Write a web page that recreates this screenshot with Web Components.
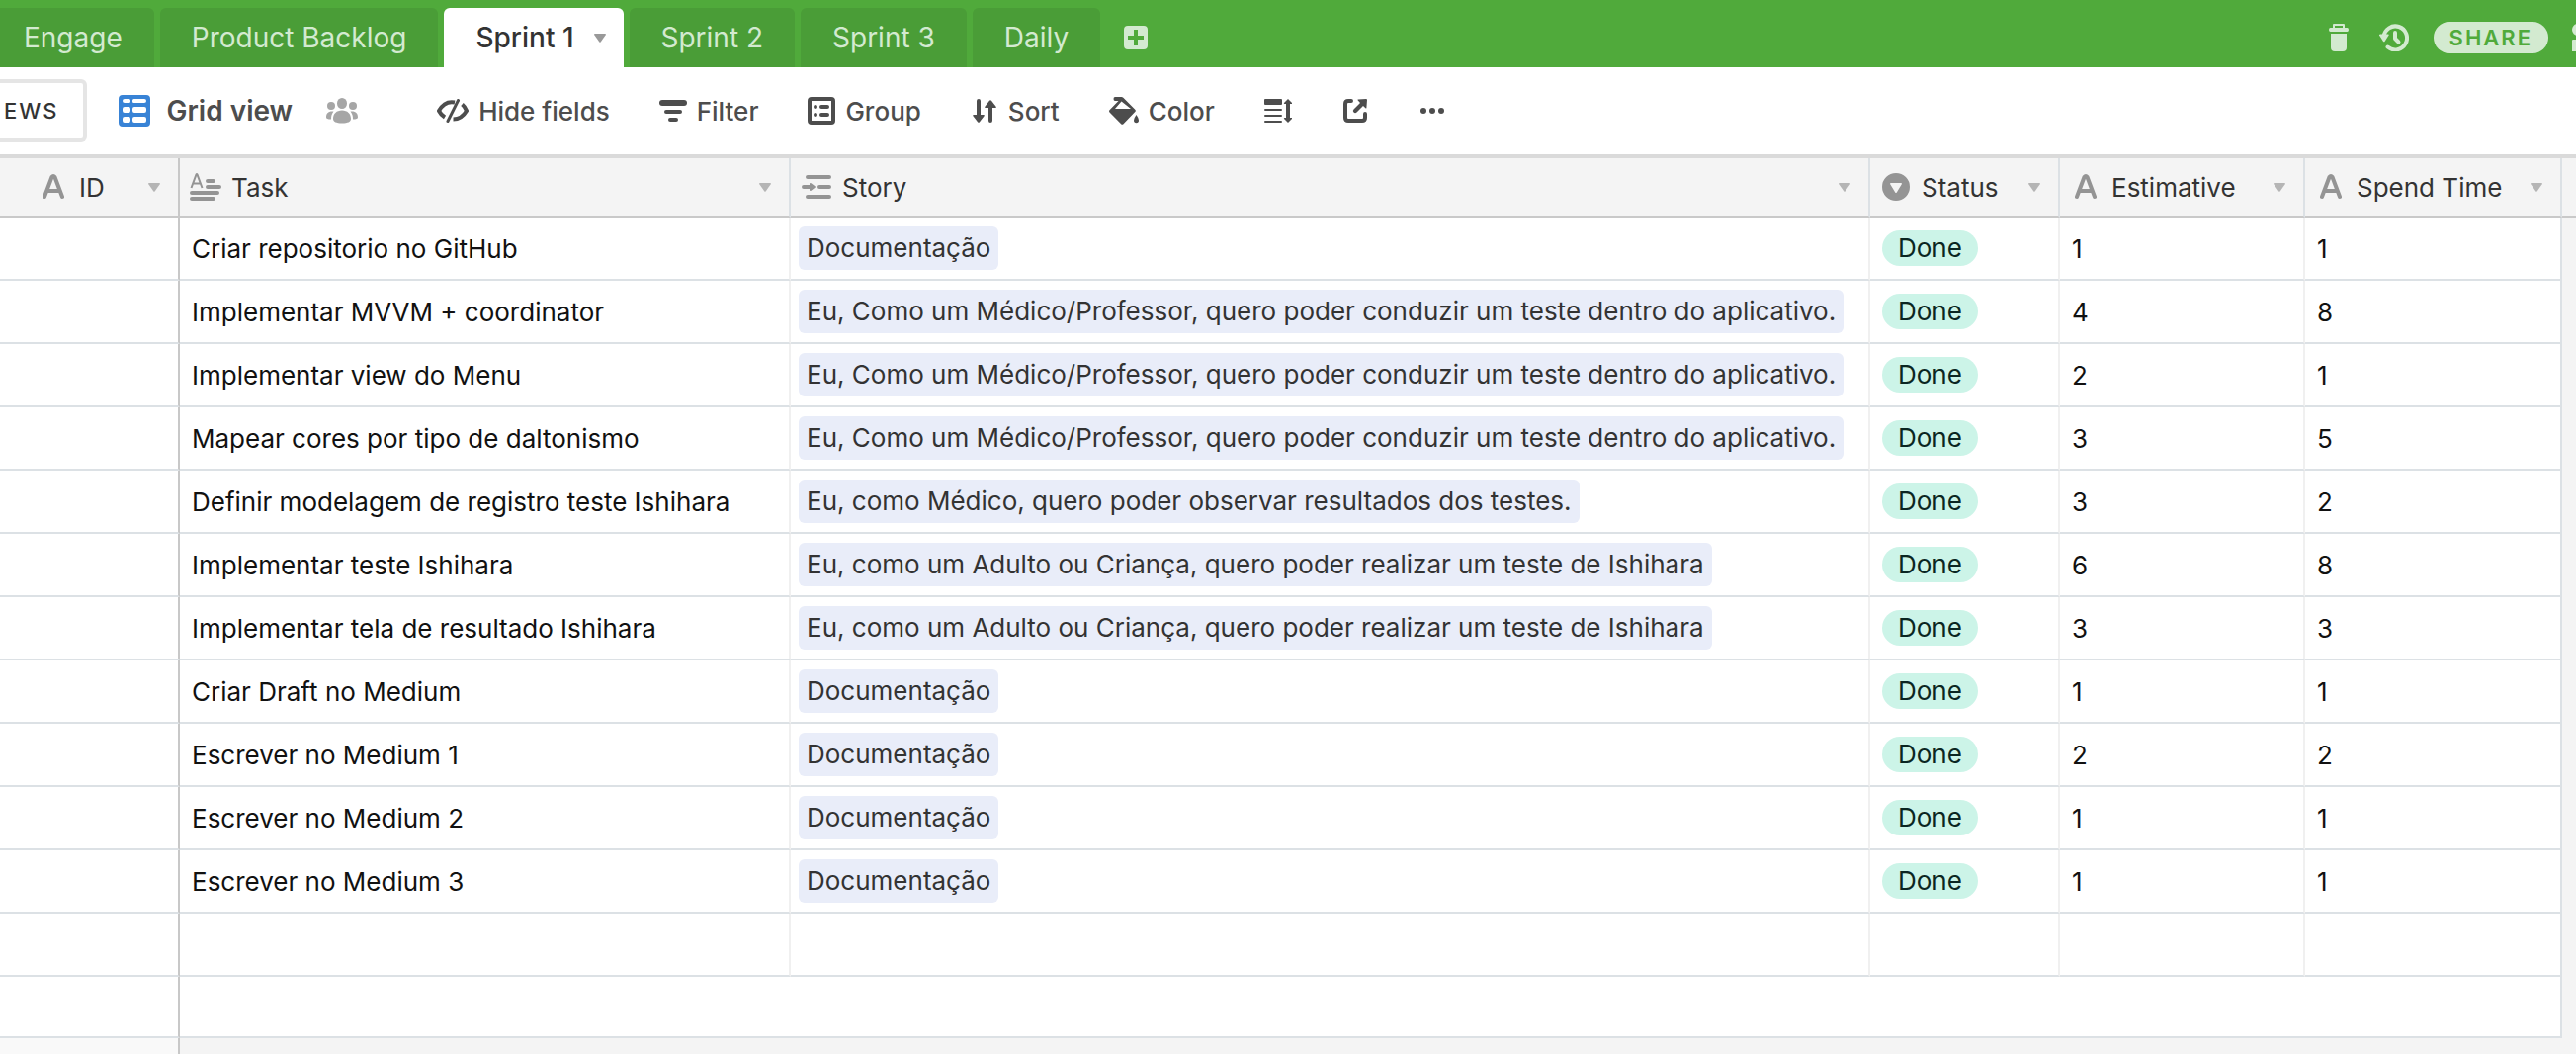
<!DOCTYPE html>
<html lang="pt">
<head>
<meta charset="utf-8">
<title>Sprint 1: Grid view</title>
<style>
  html, body { margin: 0; min-height: 100%; }
  body {
    background: #f4f4f4;
    font-family: Inter, "Liberation Sans", sans-serif;
    font-size: 26px;
    color: #333;
    overflow: hidden;
  }
</style>
</head>
<body>
<base-app></base-app>
<script>
const ICONS = {
  plus: [24, 24, '<path fill-rule="evenodd" d="M4 0h16a4 4 0 0 1 4 4v16a4 4 0 0 1-4 4H4a4 4 0 0 1-4-4V4a4 4 0 0 1 4-4zM10 4v6H4v4h6v6h4v-6h6v-4h-6V4z"/>'],
  trash: [20, 28, '<path fill-rule="evenodd" d="M4 4V1q0-1 1-1h10q1 0 1 1v3h2.500a1.500 2 0 0 1 0 4h-17a1.500 2 0 0 1 0-4zM6 2v2h8V2z"/><path d="M2 10h16v14q0 4-4 4H6q-4 0-4-4z"/>'],
  history: [30, 28, '<path d="M4.500 13A11.800 12 0 1 1 8.500 23.500" fill="none" stroke="currentColor" stroke-width="4" stroke-linecap="round"/><path d="M0 11.500q-.3-1 1-1h8q1 0 .6 1L5.500 18q-.7.700-1.400 0z"/><path d="M16 9v6l3.500 3.500" fill="none" stroke="currentColor" stroke-width="4" stroke-linecap="round" stroke-linejoin="round"/>'],
  person: [32, 28, '<circle cx="6" cy="6" r="6"/><path d="M0 17q0-1 1-1h14q1 0 1 1v11H0z"/>'],
  grid: [32, 32, '<path fill-rule="evenodd" d="M4 0h24a4 4 0 0 1 4 4v24a4 4 0 0 1-4 4H4a4 4 0 0 1-4-4V4a4 4 0 0 1 4-4zM6 4a2 2 0 0 0 0 4h4.500a1.500 1.500 0 0 0 1.500-1.500v-1A1.500 1.500 0 0 0 10.500 4zM15.500 4A1.500 1.500 0 0 0 14 5.500v1A1.500 1.500 0 0 0 15.500 8H26a2 2 0 0 0 0-4zM6 12a2 2 0 0 0-2 2v2a2 2 0 0 0 2 2h4a2 2 0 0 0 2-2v-2a2 2 0 0 0-2-2zM16 12a2 2 0 0 0-2 2v2a2 2 0 0 0 2 2h10a2 2 0 0 0 2-2v-2a2 2 0 0 0-2-2zM6 22a2 2 0 0 0-2 2v2a2 2 0 0 0 2 2h4a2 2 0 0 0 2-2v-2a2 2 0 0 0-2-2zM16 22a2 2 0 0 0-2 2v2a2 2 0 0 0 2 2h10a2 2 0 0 0 2-2v-2a2 2 0 0 0-2-2z"/>'],
  people: [32, 26, '<ellipse cx="16" cy="5.500" rx="5" ry="5.500"/><ellipse cx="5" cy="8" rx="4" ry="4"/><ellipse cx="27" cy="8" rx="4" ry="4"/><path d="M16 12.500c5.500 0 9 3.500 9 8.500 0 3-3 4.500-9 4.500S7 24 7 21c0-5 3.500-8.500 9-8.500zM7.500 13.500C5.500 16 5 18.500 5 21.500c-3.500 0-5-.5-5-2 0-4 2-6.500 7.500-6zM24.500 13.500c2 2.500 2.500 5 2.500 8 3.500 0 5-.5 5-2 0-4-2-6.500-7.500-6z"/>'],
  hide: [32, 24, '<path d="M18 3.500Q8 1.500 2 12q2 4 6 6.500M25.500 5.500q3 2.500 4.500 6.500-5 8.500-13.500 8.500" fill="none" stroke="currentColor" stroke-width="4"/><path d="M21.500 1.500 11 22.500" stroke="currentColor" stroke-width="3" stroke-linecap="round"/>'],
  filter: [28, 22, '<rect width="28" height="6" rx="3"/><rect x="5" y="10" width="18" height="4" rx="2"/><rect x="9" y="18" width="10" height="4" rx="2"/>'],
  group: [28, 28, '<rect x="2" y="2" width="24" height="24" rx="2" fill="none" stroke="currentColor" stroke-width="4"/><circle cx="8" cy="10" r="2"/><circle cx="8" cy="18" r="2"/><rect x="12" y="8" width="10" height="4" rx="2"/><rect x="12" y="16" width="10" height="4" rx="2"/>'],
  sort: [24, 24, '<path d="M4 2a2 2 0 0 1 4 0v14h3q1.500 0 .6 1.200L7 23.300q-1 1-2 0L.4 17.200Q-.5 16 1 16h3zM16 22a2 2 0 0 0 4 0V9h3q1.500 0 .6-1.200L19 1.700q-1-1-2 0l-4.600 6.100Q11.500 9 13 9h3z"/>'],
  color: [30, 28, '<path fill-rule="evenodd" d="M6 0h6.500q1 0 1.800.8L26.500 13q.8 1-.2 2L14.500 27.200q-1.200 1.200-2.400 0L.5 15.500q-1-1.200 0-2.200L9.500 4H6a1.500 2 0 0 1 0-4zM12.500 4.500 6 12h16z"/><path d="M27.500 18q2.500 3.500 2.500 5.500a2.500 2.800 0 0 1-5 0q0-2 2.500-5.500z"/>'],
  rows: [28, 24, '<rect width="18" height="6" rx="1"/><rect y="10" width="18" height="2" rx="1"/><rect y="16" width="18" height="2" rx="1"/><rect y="22" width="18" height="2" rx="1"/><path d="M24 0l4 4q.5 1-.5 1H26v14h1.500q1 0 .5 1l-4 4-4-4q-.5-1 .5-1H22V5h-1.500q-1 0-.5-1z"/>'],
  open: [24, 24, '<path d="M8 2H5Q2 2 2 5v14q0 3 3 3h14q3 0 3-3v-4" fill="none" stroke="currentColor" stroke-width="4" stroke-linecap="round"/><path d="M23 0q1 0 1 1l-.6 8q-.2 1-1 .3L20 7l-6.500 6.500a2 2 0 0 1-3-3L17 4l-2.300-2.400q-.7-.8.300-1z"/>'],
  dots: [24, 6, '<circle cx="3" cy="3" r="3"/><circle cx="12" cy="3" r="3"/><circle cx="21" cy="3" r="3"/>'],
  text: [22, 26, '<path d="M2 23 9.500 3q1.500-2 3 0L20 23M5.500 17h11" fill="none" stroke="currentColor" stroke-width="4" stroke-linecap="round" stroke-linejoin="round"/>'],
  longtext: [32, 28, '<path d="M1.500 15 6.500 1.500q.5-1 1 0l5 13.500M3.500 10.500h7" fill="none" stroke="currentColor" stroke-width="2"/><rect x="16" y="6" width="10" height="4" rx="2"/><rect x="16" y="12" width="16" height="4" rx="2"/><rect y="18" width="30" height="4" rx="2"/><rect y="24" width="26" height="4" rx="2"/>'],
  link: [30, 24, '<rect x="4" width="26" height="4" rx="2"/><rect x="16" y="10" width="14" height="4" rx="2"/><rect x="4" y="20" width="26" height="4" rx="2"/><path d="M2 10h6V9q0-1.500 1.500-.8l4 3q1 .8 0 1.600l-4 3Q8 16.500 8 15v-1H2a2 2 0 0 1 0-4z"/>'],
  select: [28, 28, '<path fill-rule="evenodd" d="M14 0a14 14 0 1 1 0 28 14 14 0 0 1 0-28zM9 10q-1.500 0-.8 1.300l5 8.200q.8 1 1.600 0l5-8.200Q20.500 10 19 10z"/>'],
  caret: [12, 9, '<path d="M1 0h10q1.500 0 .7 1.300l-4.900 7q-.8 1-1.600 0l-4.900-7Q-.5 0 1 0z"/>']
};

class UiIcon extends HTMLElement {
  connectedCallback() {
    const [w, h, art] = ICONS[this.getAttribute('name')];
    this.attachShadow({ mode: 'open' }).innerHTML = `
      <style>
        :host { display: flex; flex: none; justify-content: center; }
        svg { display: block; fill: currentColor; }
      </style>
      <svg width="${w}" height="${h}" viewBox="0 0 ${w} ${h}" aria-hidden="true">${art}</svg>`;
  }
}

class TableTab extends HTMLElement {
  connectedCallback() {
    this.attachShadow({ mode: 'open' }).innerHTML = `
      <style>
        :host { display: block; }
        button {
          display: flex; align-items: center; height: 60px; gap: 20px;
          padding: 0 32px; border: 0; border-radius: 6px 6px 0 0;
          background: #4a9d37; color: #d3ead0; font: inherit; white-space: nowrap;
        }
        ui-icon { display: none; color: #999; }
        :host([active]) button { background: #fff; color: #333; font-weight: 500; padding-right: 18px; }
        :host([active]) ui-icon { display: block; }
      </style>
      <button role="tab" aria-selected="${this.hasAttribute('active')}"><slot></slot><ui-icon name="caret"></ui-icon></button>`;
  }
}

class TopBar extends HTMLElement {
  connectedCallback() {
    this.attachShadow({ mode: 'open' }).innerHTML = `
      <style>
        :host {
          display: flex; align-items: center; justify-content: space-between;
          height: 68px; background: #50aa3b; color: #d3ead0; font-size: 28px; overflow: hidden;
        }
        nav { display: flex; gap: 6px; padding-top: 8px; margin-left: -8px; align-items: center; }
        button { display: flex; align-items: center; justify-content: center; border: 0; background: none; padding: 0; color: inherit; font: inherit; }
        .add { margin-left: 18px; }
        .actions { display: flex; align-items: center; gap: 24px; padding-top: 8px; margin-right: -28px; }
        .actions button { min-width: 32px; }
        .share {
          height: 32px; padding: 0 16px; border-radius: 16px; background: #d3ead0; color: #50aa3b;
          font-size: 22px; font-weight: 600; letter-spacing: 2px;
        }
      </style>
      <nav role="tablist">
        <table-tab>Engage</table-tab><table-tab>Product Backlog</table-tab>
        <table-tab active>Sprint 1</table-tab><table-tab>Sprint 2</table-tab>
        <table-tab>Sprint 3</table-tab><table-tab>Daily</table-tab>
        <button class="add" aria-label="Add table"><ui-icon name="plus"></ui-icon></button>
      </nav>
      <div class="actions">
        <button aria-label="Trash"><ui-icon name="trash"></ui-icon></button>
        <button aria-label="History"><ui-icon name="history"></ui-icon></button>
        <button class="share">SHARE</button>
        <button aria-label="Collaborators"><ui-icon name="person"></ui-icon></button>
      </div>`;
  }
}

class ToolButton extends HTMLElement {
  connectedCallback() {
    this.attachShadow({ mode: 'open' }).innerHTML = `
      <style>
        :host { display: block; }
        ui-icon { min-width: 28px; }
        button {
          display: flex; align-items: center; gap: 10px; height: 48px; padding: 0;
          border: 0; background: none; color: #4d4d4d; font: inherit; font-weight: 500; white-space: nowrap;
        }
      </style>
      <button aria-label="${this.getAttribute('label') || this.textContent}"><ui-icon name="${this.getAttribute('icon')}"></ui-icon><slot></slot></button>`;
  }
}

class ViewBar extends HTMLElement {
  connectedCallback() {
    this.attachShadow({ mode: 'open' }).innerHTML = `
      <style>
        :host { display: flex; align-items: center; height: 88px; background: #fff; border-bottom: 4px solid #dadada; }
        button { font: inherit; background: none; border: 0; padding: 0; }
        .views {
          height: 64px; padding: 0 24px 0 4px; border: 4px solid #e5e5e5; border-left: 0;
          border-radius: 0 6px 6px 0; color: #333; font-size: 22px; font-weight: 500; letter-spacing: 2px;
        }
        .view { display: flex; align-items: center; gap: 17px; margin-left: 32px; font-size: 28px; font-weight: 600; color: #4d4d4d; white-space: nowrap; }
        .grid { color: #3883d6; }
        .shared { display: flex; color: #a6a6a6; margin-left: 34px; }
        .tools { display: flex; align-items: center; gap: 50px; margin-left: 80px; }
      </style>
      <button class="views">EWS</button>
      <button class="view"><ui-icon class="grid" name="grid"></ui-icon>Grid view</button>
      <button class="shared" aria-label="Collaborative view"><ui-icon name="people"></ui-icon></button>
      <div class="tools">
        <tool-button icon="hide">Hide fields</tool-button>
        <tool-button icon="filter">Filter</tool-button>
        <tool-button icon="group">Group</tool-button>
        <tool-button icon="sort">Sort</tool-button>
        <tool-button icon="color">Color</tool-button>
        <tool-button icon="rows" label="Row height"></tool-button>
        <tool-button icon="open" label="Share view"></tool-button>
        <tool-button icon="dots" label="More"></tool-button>
      </div>`;
  }
}

class FieldHead extends HTMLElement {
  connectedCallback() {
    this.attachShadow({ mode: 'open' }).innerHTML = `
      <style>
        :host { display: flex; align-items: center; padding: 0 18px 0 10px; color: #333; }
        .kind { width: 32px; margin-right: 10px; color: #949494; }
        .name { flex: 1; white-space: nowrap; }
        button { border: 0; background: none; padding: 0; color: #b5b5b5; display: flex; }
      </style>
      <ui-icon class="kind" name="${this.getAttribute('icon')}"></ui-icon>
      <span class="name"><slot></slot></span>
      <button aria-label="Field menu"><ui-icon name="caret"></ui-icon></button>`;
  }
}

class RecordChip extends HTMLElement {
  connectedCallback() {
    this.attachShadow({ mode: 'open' }).innerHTML = `
      <style>
        :host {
          display: inline-block; height: 44px; line-height: 44px; padding: 0 8px; border-radius: 6px;
          background: #e9edf9; color: #333; white-space: nowrap; vertical-align: middle;
        }
      </style><slot></slot>`;
  }
}

class StatusPill extends HTMLElement {
  connectedCallback() {
    this.attachShadow({ mode: 'open' }).innerHTML = `
      <style>
        :host {
          display: inline-block; height: 36px; line-height: 36px; padding: 0 16px; border-radius: 18px;
          background: #ccf4e8; color: #0b2622; vertical-align: middle;
        }
      </style><slot></slot>`;
  }
}

const DOC = 'Documentação';
const DOCTOR = 'Eu, Como um Médico/Professor, quero poder conduzir um teste dentro do aplicativo.';
const RESULTS = 'Eu, como Médico, quero poder observar resultados dos testes.';
const ISHIHARA = 'Eu, como um Adulto ou Criança, quero poder realizar um teste de Ishihara';
const RECORDS = [
  ['Criar repositorio no GitHub', DOC, 1, 1],
  ['Implementar MVVM + coordinator', DOCTOR, 4, 8],
  ['Implementar view do Menu', DOCTOR, 2, 1],
  ['Mapear cores por tipo de daltonismo', DOCTOR, 3, 5],
  ['Definir modelagem de registro teste Ishihara', RESULTS, 3, 2],
  ['Implementar teste Ishihara', ISHIHARA, 6, 8],
  ['Implementar tela de resultado Ishihara', ISHIHARA, 3, 3],
  ['Criar Draft no Medium', DOC, 1, 1],
  ['Escrever no Medium 1', DOC, 2, 2],
  ['Escrever no Medium 2', DOC, 1, 1],
  ['Escrever no Medium 3', DOC, 1, 1]
];

class RecordGrid extends HTMLElement {
  connectedCallback() {
    const rows = RECORDS.map(([task, story, estimate, spent]) => `
      <tr><td></td><td>${task}</td><td class="story"><record-chip>${story}</record-chip></td>
      <td><status-pill>Done</status-pill></td><td>${estimate}</td><td>${spent}</td></tr>`).join('');
    this.attachShadow({ mode: 'open' }).innerHTML = `
      <style>
        :host { display: block; }
        .frame { padding-right: 14px; background: linear-gradient(#c9c9c9, #c9c9c9) 0 58px / 100% 2px no-repeat; }
        table { width: 100%; table-layout: fixed; border-collapse: separate; border-spacing: 0; }
        th, td { box-sizing: border-box; padding: 0; text-align: left; font-weight: 400; }
        th { height: 60px; background: #f4f4f4; border-bottom: 2px solid #c9c9c9; border-right: 2px solid #dce1e5; }
        td {
          height: 64px; padding-left: 12px; background: #fff; color: #111; white-space: nowrap;
          border-bottom: 2px solid #dce1e5; border-right: 2px solid #f0f0f0;
        }
        .story { padding-left: 8px; }
        td:last-child { border-right-color: #dce1e5; }
        th:first-child, td:first-child { border-right-color: #c8c8c8; }
        th:first-child { padding-left: 28px; }
        .add td { height: 62px; }
        .c-id { width: 182px; } .c-task { width: 618px; } .c-status { width: 192px; }
        .c-est { width: 248px; } .c-spend { width: 260px; }
        .rest { display: flex; height: 16px; }
        .rest div { box-sizing: border-box; width: 182px; background: #f9f9f9; border-right: 2px solid #c8c8c8; }
      </style>
      <div class="frame">
        <table>
          <colgroup><col class="c-id"><col class="c-task"><col><col class="c-status"><col class="c-est"><col class="c-spend"></colgroup>
          <thead><tr>
            <th><field-head icon="text">ID</field-head></th>
            <th><field-head icon="longtext">Task</field-head></th>
            <th><field-head icon="link">Story</field-head></th>
            <th><field-head icon="select">Status</field-head></th>
            <th><field-head icon="text">Estimative</field-head></th>
            <th><field-head icon="text">Spend Time</field-head></th>
          </tr></thead>
          <tbody>${rows}
            <tr><td></td><td></td><td></td><td></td><td></td><td></td></tr>
            <tr class="add"><td></td><td colspan="5"></td></tr>
          </tbody>
        </table>
      </div>
      <div class="rest"><div></div></div>`;
  }
}

class BaseApp extends HTMLElement {
  connectedCallback() {
    this.attachShadow({ mode: 'open' }).innerHTML = `
      <style>:host { display: block; }</style>
      <top-bar></top-bar><view-bar></view-bar><record-grid></record-grid>`;
  }
}

for (const [tag, type] of Object.entries({
  'ui-icon': UiIcon, 'table-tab': TableTab, 'top-bar': TopBar, 'tool-button': ToolButton, 'view-bar': ViewBar,
  'field-head': FieldHead, 'record-chip': RecordChip, 'status-pill': StatusPill, 'record-grid': RecordGrid, 'base-app': BaseApp
})) customElements.define(tag, type);
</script>
</body>
</html>
